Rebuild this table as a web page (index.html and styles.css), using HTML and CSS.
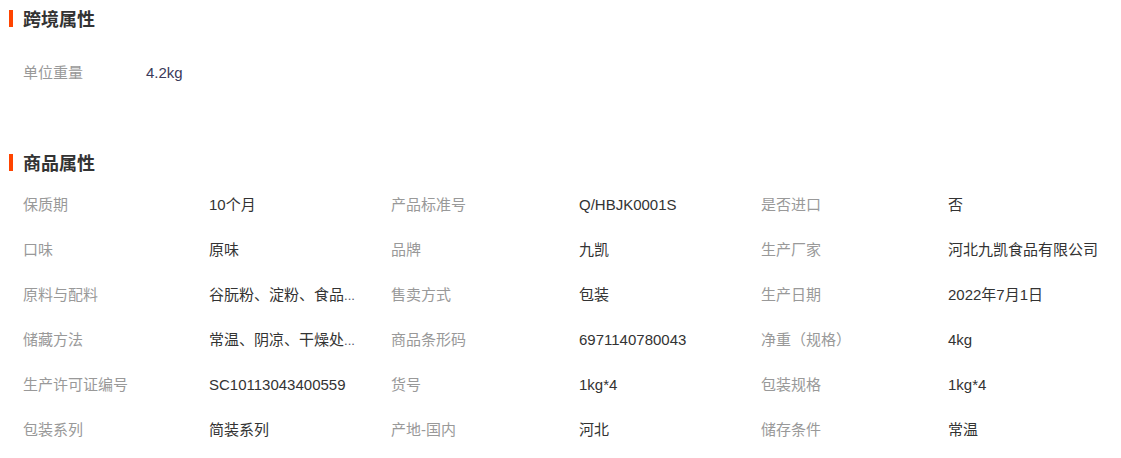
FILE: index.html
```html
<!DOCTYPE html>
<html lang="zh-CN">
<head>
    <meta charset="UTF-8">
    <meta name="viewport" content="width=device-width, initial-scale=1.0">
    <title>商品属性</title>
    <link rel="stylesheet" href="styles.css">
</head>
<body>
    <div class="section">
        <h3 class="title"><span class="bar"></span>跨境属性</h3>
        <div class="attrs single">
            <span class="label">单位重量</span><span class="value num">4.2kg</span>
        </div>
    </div>

    <div class="section second">
        <h3 class="title"><span class="bar"></span>商品属性</h3>
        <div class="attrs grid">
            <span class="label">保质期</span><span class="value">10个月</span>
            <span class="label">产品标准号</span><span class="value">Q/HBJK0001S</span>
            <span class="label">是否进口</span><span class="value">否</span>

            <span class="label">口味</span><span class="value">原味</span>
            <span class="label">品牌</span><span class="value">九凯</span>
            <span class="label">生产厂家</span><span class="value">河北九凯食品有限公司</span>

            <span class="label">原料与配料</span><span class="value">谷朊粉、淀粉、食品<span class="dots">...</span></span>
            <span class="label">售卖方式</span><span class="value">包装</span>
            <span class="label">生产日期</span><span class="value">2022年7月1日</span>

            <span class="label">储藏方法</span><span class="value">常温、阴凉、干燥处<span class="dots">...</span></span>
            <span class="label">商品条形码</span><span class="value">6971140780043</span>
            <span class="label">净重（规格）</span><span class="value">4kg</span>

            <span class="label">生产许可证编号</span><span class="value">SC10113043400559</span>
            <span class="label">货号</span><span class="value">1kg*4</span>
            <span class="label">包装规格</span><span class="value">1kg*4</span>

            <span class="label">包装系列</span><span class="value">简装系列</span>
            <span class="label">产地-国内</span><span class="value">河北</span>
            <span class="label">储存条件</span><span class="value">常温</span>
        </div>
    </div>
</body>
</html>
```

FILE: styles.css
```css
body {
    margin: 0;
    padding: 0;
    background: #ffffff;
    font-family: 'Liberation Sans', 'Noto Sans CJK SC', sans-serif;
    font-size: 15px;
    color: #333;
}

.section.second {
    margin-top: 49px;
}

.title {
    display: flex;
    align-items: center;
    gap: 10px;
    height: 36px;
    margin: 0;
    padding-left: 9px;
    font-size: 18px;
    font-weight: bold;
    color: #333;
}

.bar {
    width: 4px;
    height: 17px;
    background-color: #ff4400;
}

.attrs {
    padding-left: 23px;
}

.attrs.single {
    display: flex;
    margin-top: 14px;
}

.attrs.single .label {
    width: 123px;
}

.attrs.grid {
    display: grid;
    grid-template-columns: 186px 182px 188px 182px 187px 1fr;
    padding-top: 2px;
}

.label,
.value {
    height: 45px;
    line-height: 45px;
    white-space: nowrap;
}

.label {
    color: #999;
}

.value {
    color: #333;
}

.dots {
    font-size: 13px;
    color: #556;
}

.num {
    color: #3a3a5a;
}
```
